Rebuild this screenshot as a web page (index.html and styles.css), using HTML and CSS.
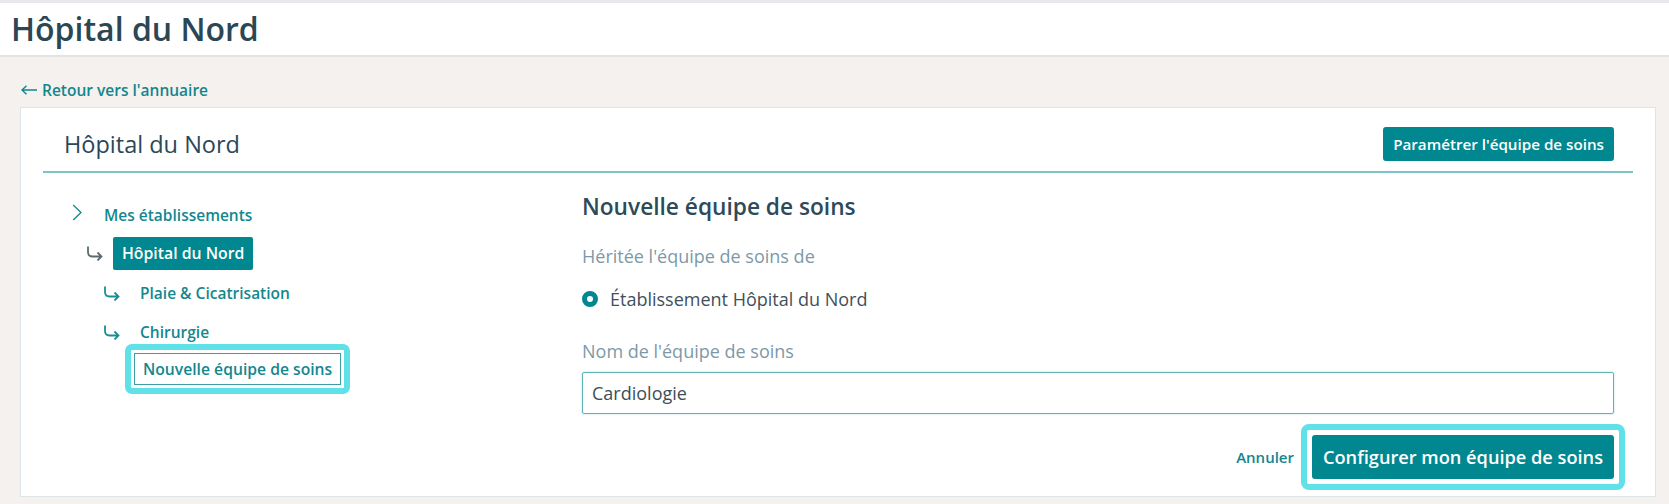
FILE: index.html
```html
<!DOCTYPE html>
<html lang="fr">
<head>
<meta charset="utf-8">
<title>Hôpital du Nord</title>
<link rel="stylesheet" href="styles.css">
</head>
<body>
<div class="topbar"></div>
<header class="page-header">
  <h1 class="page-title">Hôpital du Nord</h1>
</header>
<main class="content">
  <a class="back-link" href="#">
    <svg class="back-icon" width="16" height="10" viewBox="0 0 16 10"><path d="M1 5 H16 M5.5 0.7 L1 5 L5.5 9.3" fill="none" stroke="currentColor" stroke-width="1.4"/></svg>
    <span>Retour vers l'annuaire</span>
  </a>
  <section class="card">
    <div class="card-header">
      <h2 class="card-title">Hôpital du Nord</h2>
      <button class="btn btn-sm" type="button">Paramétrer l'équipe de soins</button>
    </div>
    <div class="card-body">
      <ul class="tree">
        <li class="tree-row level-0">
          <svg class="chevron" width="10" height="17" viewBox="0 0 10 17"><polyline points="1.2,1 9,8.5 1.2,16" fill="none" stroke="currentColor" stroke-width="1.5"/></svg>
          <span class="tree-label">Mes établissements</span>
        </li>
        <li class="tree-row level-1">
          <svg class="hook hook-dark" width="17" height="15" viewBox="0 0 17 15"><path d="M2 0.5 V6 Q2 10.5 6.5 10.5 H15.5 M11.5 6.5 L15.5 10.5 L11.5 14.5" fill="none" stroke="currentColor" stroke-width="1.8"/></svg>
          <span class="tree-badge">Hôpital du Nord</span>
        </li>
        <li class="tree-row level-2">
          <svg class="hook" width="17" height="15" viewBox="0 0 17 15"><path d="M2 0.5 V6 Q2 10.5 6.5 10.5 H15.5 M11.5 6.5 L15.5 10.5 L11.5 14.5" fill="none" stroke="currentColor" stroke-width="1.8"/></svg>
          <span class="tree-label">Plaie &amp; Cicatrisation</span>
        </li>
        <li class="tree-row level-2 row-chir">
          <svg class="hook" width="17" height="15" viewBox="0 0 17 15"><path d="M2 0.5 V6 Q2 10.5 6.5 10.5 H15.5 M11.5 6.5 L15.5 10.5 L11.5 14.5" fill="none" stroke="currentColor" stroke-width="1.8"/></svg>
          <span class="tree-label">Chirurgie</span>
        </li>
        <li class="tree-row level-3">
          <span class="focus-ring"><span class="tree-new">Nouvelle équipe de soins</span></span>
        </li>
      </ul>
      <form class="form">
        <h3 class="form-title">Nouvelle équipe de soins</h3>
        <p class="form-label label-inherit">Héritée l'équipe de soins de</p>
        <label class="radio-row">
          <span class="radio"></span>
          <span class="radio-text">Établissement Hôpital du Nord</span>
        </label>
        <p class="form-label label-name">Nom de l'équipe de soins</p>
        <div class="input">Cardiologie</div>
        <div class="actions">
          <a class="cancel" href="#">Annuler</a>
          <span class="btn-ring"><button class="btn btn-lg" type="button">Configurer mon équipe de soins</button></span>
        </div>
      </form>
    </div>
  </section>
</main>
</body>
</html>
```
FILE: styles.css
```css
* { box-sizing: border-box; }
html, body { margin: 0; padding: 0; }
body {
  background: #f4f1ee;
  font-family: "Open Sans", "Noto Sans", sans-serif;
  color: #2d4856;
  height: 504px;
  overflow: hidden;
}
.topbar { height: 3px; background: #e7e8ec; }
.page-header {
  height: 54px;
  background: #ffffff;
  border-bottom: 2px solid #e2e2e2;
  display: flex;
  align-items: center;
  padding-left: 11px;
}
.page-title {
  margin: 0;
  font-size: 32px;
  font-weight: 600;
  color: #2b4654;
  line-height: 40px;
}
.content { padding: 0 13px 0 20px; }
.back-link {
  display: flex;
  align-items: center;
  height: 20px;
  margin: 23px 0 7px 1px;
  color: #13858e;
  text-decoration: none;
  font-size: 15.5px;
  font-weight: 600;
}
.back-icon { margin-right: 5px; }
.card {
  background: #ffffff;
  border: 1px solid #dbe5e8;
  height: 390px;
}
.card-header {
  margin: 0 22px;
  padding: 19px 19px 10px 21px;
  border-bottom: 2px solid #7cc5c6;
  display: flex;
  justify-content: space-between;
  align-items: center;
}
.card-title {
  margin: 0;
  font-size: 23.5px;
  font-weight: 500;
  color: #2b4858;
  line-height: 30px;
}
.btn {
  border: none;
  background: #00878f;
  color: #ffffff;
  font-family: inherit;
  font-weight: 600;
  border-radius: 3px;
  cursor: pointer;
}
.btn-sm { height: 34px; padding: 0 10px; font-size: 15.2px; }
.btn-lg { height: 44px; padding: 0 11px; font-size: 18.2px; display: block; }
.card-body {
  display: grid;
  grid-template-columns: 539px 1fr;
  padding: 0 41px 0 22px;
}
.tree { list-style: none; margin: 0; padding: 0; }
.tree-row {
  display: flex;
  align-items: center;
  font-size: 15.5px;
  font-weight: 600;
  color: #14878f;
  line-height: 24px;
}
.level-0 { margin-top: 30px; padding-left: 29px; }
.level-0 .chevron { color: #1f8f97; margin-right: 22px; margin-bottom: 6px; }
.level-1 { margin-top: 10px; padding-left: 43px; height: 33px; }
.hook { color: #1a8e96; }
.hook-dark { color: #5c6a71; margin-right: 10px; }
.tree-badge {
  background: #00878f;
  color: #ffffff;
  height: 33px;
  line-height: 33px;
  padding: 0 9px;
  border-radius: 2px;
  font-size: 15.8px;
}
.level-2 { margin-top: 11px; padding-left: 60px; }
.level-2 .hook { margin-right: 20px; }
.row-chir { margin-top: 15px; }
.level-3 { padding-left: 82px; }
.focus-ring {
  display: inline-block;
  padding: 3px;
  border: 6px solid #5fe1e7;
  border-radius: 7px;
}
.tree-new {
  display: block;
  height: 32px;
  line-height: 30px;
  padding: 0 8px;
  border: 1px solid #3c9ea5;
  color: #14878f;
  font-size: 15.7px;
}
.form { display: flex; flex-direction: column; }
.form-title {
  margin: 19px 0 0;
  font-size: 22.7px;
  font-weight: 600;
  line-height: 30px;
  color: #2d4a59;
}
.form-label {
  margin: 0;
  font-size: 18px;
  line-height: 24px;
  color: #7d99a7;
}
.label-inherit { margin-top: 22px; }
.radio-row {
  display: flex;
  align-items: center;
  margin-top: 19px;
  height: 24px;
}
.radio {
  width: 16px;
  height: 16px;
  border-radius: 50%;
  border: 5px solid #00878f;
  background: #ffffff;
  margin-right: 12px;
}
.radio-text { font-size: 18px; color: #3f505b; }
.label-name { margin-top: 28px; }
.input {
  margin-top: 9px;
  height: 42px;
  border: 1px solid #5fb3b8;
  box-shadow: 0 0 2px rgba(0, 135, 143, 0.35);
  border-radius: 2px;
  padding-left: 9px;
  display: flex;
  align-items: center;
  font-size: 18px;
  color: #3d4d58;
}
.actions {
  margin-top: 10px;
  display: flex;
  justify-content: flex-end;
  align-items: center;
  margin-right: -11px;
}
.cancel {
  color: #13858e;
  font-size: 15px;
  font-weight: 600;
  text-decoration: none;
  margin-right: 7px;
}
.btn-ring {
  display: inline-block;
  padding: 5px;
  border: 6px solid #5fe1e7;
  border-radius: 8px;
}
```
